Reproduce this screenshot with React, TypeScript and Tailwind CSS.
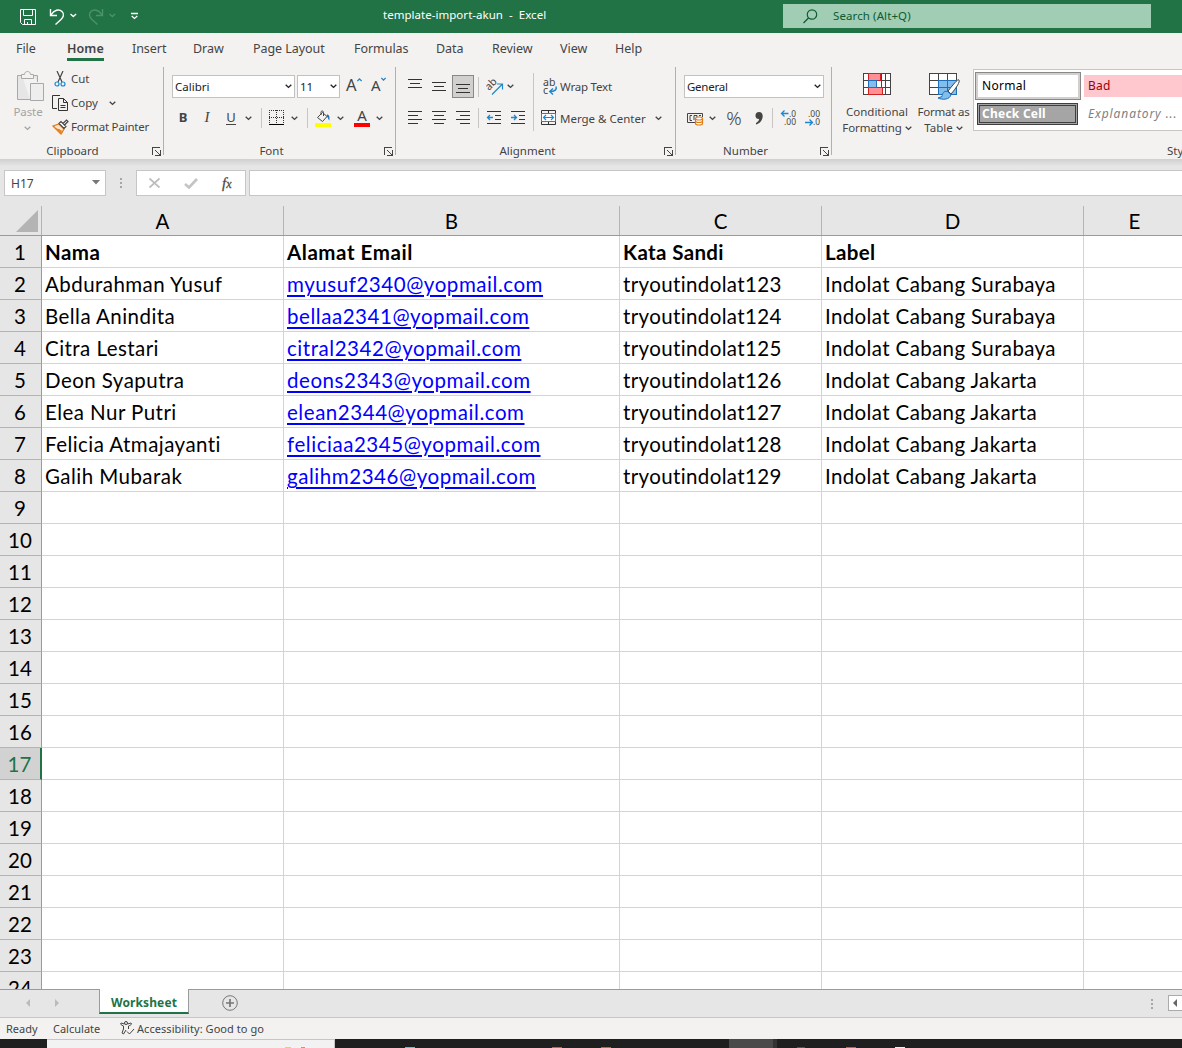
import React from 'react';
import clsx from 'clsx';

const tabs = [
  { name: 'File', width: 'w-[51px]' },
  { name: 'Home', width: 'w-[65px]', active: true },
  { name: 'Insert', width: 'w-[61px]' },
  { name: 'Draw', width: 'w-[60px]' },
  { name: 'Page Layout', width: 'w-[101px]' },
  { name: 'Formulas', width: 'w-[82px]' },
  { name: 'Data', width: 'w-[56px]' },
  { name: 'Review', width: 'w-[68px]' },
  { name: 'View', width: 'w-[55px]' },
  { name: 'Help', width: 'w-[60px]' },
];

const columns = [
  { name: 'A', width: 'w-[242px]', tracking: 'tracking-[.45px]' },
  { name: 'B', width: 'w-[336px]', tracking: 'tracking-[.55px]' },
  { name: 'C', width: 'w-[202px]', tracking: 'tracking-[.37px]' },
  { name: 'D', width: 'w-[262px]', tracking: 'tracking-[.37px]' },
  { name: 'E', width: 'w-[102px]', tracking: 'tracking-[.37px]' },
];

const data = [
  ['Nama', 'Alamat Email', 'Kata Sandi', 'Label'],
  ['Abdurahman Yusuf', 'myusuf2340@yopmail.com', 'tryoutindolat123', 'Indolat Cabang Surabaya'],
  ['Bella Anindita', 'bellaa2341@yopmail.com', 'tryoutindolat124', 'Indolat Cabang Surabaya'],
  ['Citra Lestari', 'citral2342@yopmail.com', 'tryoutindolat125', 'Indolat Cabang Surabaya'],
  ['Deon Syaputra', 'deons2343@yopmail.com', 'tryoutindolat126', 'Indolat Cabang Jakarta'],
  ['Elea Nur Putri', 'elean2344@yopmail.com', 'tryoutindolat127', 'Indolat Cabang Jakarta'],
  ['Felicia Atmajayanti', 'feliciaa2345@yopmail.com', 'tryoutindolat128', 'Indolat Cabang Jakarta'],
  ['Galih Mubarak', 'galihm2346@yopmail.com', 'tryoutindolat129', 'Indolat Cabang Jakarta'],
];

const SELECTED_ROW = 17;

interface ClassProps {
  className?: string;
}

function Chevron({ className = '' }: ClassProps) {
  return (
    <svg width="7" height="5" viewBox="0 0 7 5" fill="none" stroke="currentColor" strokeWidth="1.4" className={clsx('shrink-0', className)}>
      <path d="M.7 .8 3.5 3.4 6.3 .8" />
    </svg>
  );
}

function Launcher() {
  return (
    <svg width="9" height="9" viewBox="0 0 9 9" fill="none" stroke="#444" shapeRendering="crispEdges">
      <path d="M.5 8V.5H8M8.5 3v5.5H3" />
      <path d="m3 3 5 5" shapeRendering="auto" />
    </svg>
  );
}

function Divider({ className = '' }: ClassProps) {
  return <div className={clsx('w-px shrink-0 bg-[#c8c6c4]', className)} />;
}

function Slot({ className = '', children }: ClassProps & { children: React.ReactNode }) {
  return <div className={clsx('flex h-6 shrink-0 items-center justify-center', className)}>{children}</div>;
}

function Group({ label, className = '', labelClass = '', children }: ClassProps & {
  label: string;
  labelClass?: string;
  children: React.ReactNode;
}) {
  return (
    <div className={clsx('flex h-[88px] shrink-0 flex-col justify-between border-r border-[#b1b0af]', className)}>
      <div>{children}</div>
      <div className="-mb-1 flex h-4 items-center">
        <div className={clsx('grow text-center', labelClass)}>{label}</div>
        <div className="w-[11px] shrink-0"><Launcher /></div>
      </div>
    </div>
  );
}

function Lines({ rows }: { rows: number[][] }) {
  return (
    <svg width="16" height="16" viewBox="0 0 16 16" stroke="#333" shapeRendering="crispEdges">
      {rows.map(([y, x1, x2]) => (
        <path key={y} d={`M${x1} ${y + 0.5}H${x2}`} />
      ))}
    </svg>
  );
}

function TitleBar() {
  return (
    <div className="flex h-[33px] items-center bg-[#217346] text-white">
      <svg width="150" height="33" viewBox="0 0 150 33" fill="none" stroke="#fff" className="shrink-0">
        <path d="M20.5 9.5h15v15h-13l-2-2zM23.5 9.5v6h9v-6M24.5 24.5v-5h7v5M27.5 24v-2" />
        <path d="M50.5 9v6.5H57M51 15c3-5 8-6.500 11-3.500s1 6-1 8l-5.500 5" strokeWidth="1.400" />
        <path d="m70.500 14 2.800 2.500 2.800-2.500" strokeWidth="1.400" />
        <g stroke="#4c9169" strokeWidth="1.400">
          <path d="M102.500 9v6.500H96M102 15c-3-5-8-6.500-11-3.500s-1 6 1 8l5.500 5" />
          <path d="m109.500 14 2.800 2.500 2.800-2.500" />
        </g>
        <path d="M131 13.500h7M131.700 16l2.800 2.500 2.800-2.500" strokeWidth="1.300" />
      </svg>
      <div className="w-[633px] shrink-0 pb-[3px] pl-[233px] tracking-[.03px] whitespace-pre">template-import-akun  -  Excel</div>
      <div className="mb-px flex h-6 w-[368px] items-center bg-[#a0cdb4] pl-5 text-[#0e5c2f]">
        <svg width="15" height="15" viewBox="0 0 15 15" fill="none" stroke="currentColor" strokeWidth="1.200">
          <circle cx="9" cy="5.500" r="4.700" />
          <path d="M5.500 9 .5 14" />
        </svg>
        <span className="pl-[15px] tracking-[.1px]">Search (Alt+Q)</span>
      </div>
    </div>
  );
}

function TabStrip() {
  return (
    <div className="flex h-[34px] pl-4 text-[12.500px] tracking-[-.05px]">
      {tabs.map((tab) => (
        <div key={tab.name} className={clsx('shrink-0 pt-1.5 leading-[19px] whitespace-nowrap', tab.width)}>
          <span className={clsx('inline-block', tab.active && 'h-[22px] border-b-3 border-[#217346] tracking-[.1px] font-semibold')}>
            {tab.name}
          </span>
        </div>
      ))}
    </div>
  );
}

function ClipboardGroup() {
  return (
    <Group label="Clipboard" className="w-[164px]" labelClass="pr-[7px]">
      <div className="flex">
        <div className="flex w-[52px] flex-col items-center pt-1 pl-1 text-[#a5a4a3]">
          <svg width="28" height="31" viewBox="0 0 28 31" fill="none" stroke="#a8a8a8" className="ml-[3px]">
            <path d="M14 28.500H1.500v-24H6M17 4.500h4.500V11" fill="#e6e6e6" />
            <path d="M5.500 7.500v-4h3c0-4 6-4 6 0h3v4z" fill="#f3f2f1" />
            <path d="M14.500 12.500h13v17h-13z" fill="#eee" />
          </svg>
          <span className="pt-[2px] leading-4 tracking-[-.1px]">Paste</span>
          <Chevron className="mt-1.5 mr-px" />
        </div>
        <div>
          <div className="flex h-6 items-center">
            <svg width="19" height="16" viewBox="0 0 19 16" fill="none" stroke="#444" strokeWidth="1.200">
              <path d="m5 0 5 11M11 0 6 11" />
              <circle cx="5" cy="13" r="2" stroke="#1e88cf" />
              <circle cx="11" cy="13" r="2" stroke="#1e88cf" />
            </svg>
            Cut
          </div>
          <div className="flex h-6 items-center">
            <svg width="19" height="16" viewBox="0 0 19 16" fill="none" stroke="#333">
              <path d="M5 13.500H.5V.5H8" />
              <path d="M6.500 3.500h5l4 4v8h-9zM11.500 3.500v4h4M8.500 10.500h5M8.500 12.500h5" />
            </svg>
            Copy
            <Chevron className="ml-[11px]" />
          </div>
          <div className="flex h-6 items-center">
            <svg width="19" height="16" viewBox="0 0 19 16" fill="none">
              <path d="m1 7 6-2 5 5-3 5z" fill="#fbe3cb" stroke="#e07a10" strokeWidth="1.300" />
              <path d="M3 9 8.500 10.500l-2 2.500zM6 12l3-1 1 1-1.500 3z" fill="#e98220" />
              <path d="m7 4.500 2-2 5 5-2 2zM11 4.500l3.500-3.500L16 2.500 12.500 6" fill="#fff" stroke="#444" strokeWidth="1.200" />
            </svg>
            <span className="tracking-[-.2px] whitespace-nowrap">Format Painter</span>
          </div>
        </div>
      </div>
    </Group>
  );
}

function FontGroup() {
  return (
    <Group label="Font" className="w-[232px] pl-2" labelClass="pr-[13px]">
      <div className="mt-2 flex h-[23px] items-center">
        <div className="flex h-[23px] w-[123px] items-center justify-between border border-[#c3c2c1] bg-white pr-0.5 pl-[2px] text-[#222]">
          Calibri <Chevron />
        </div>
        <div className="ml-0.5 flex h-[23px] w-[43px] items-center justify-between border border-[#c3c2c1] bg-white pr-0.5 pl-[2px] text-[#222]">
          11 <Chevron />
        </div>
        <div className="-mt-1 flex w-6 items-start pl-1.5 text-[16.500px] leading-[22px]">
          A<svg width="5" height="4" viewBox="0 0 5 4" fill="none" stroke="#1e88cf" strokeWidth="1.300" className="mt-[4px] shrink-0"><path d="m.3 3 2.200-2 2.200 2" /></svg>
        </div>
        <div className="-mt-1 flex w-6 items-start pl-[7px] text-[15px] leading-[24px]">
          A<svg width="5" height="4" viewBox="0 0 5 4" fill="none" stroke="#1e88cf" strokeWidth="1.300" className="mt-[4px] shrink-0"><path d="m.3 1 2.200 2 2.200-2" /></svg>
        </div>
      </div>
      <div className="mt-2 flex items-center text-[13px]">
        <Slot className="w-[22px] pb-px font-bold">B</Slot>
        <Slot className="w-[26px] pb-px font-['Liberation_Serif'] text-[15px] italic">I</Slot>
        <Slot className="w-[22px]"><span className="border-b border-[#444] leading-[13px]">U</span></Slot>
        <Slot className="w-[13px]"><Chevron /></Slot>
        <Divider className="ml-[6px] h-5" />
        <Slot className="ml-[6px] w-[17px]">
          <svg width="15" height="16" viewBox="0 0 15 16" fill="none" stroke="#333" shapeRendering="crispEdges">
            <path d="M0 .5h15M.5 0v14M14.500 0v14M7.500 0v14M0 7.500h15" strokeDasharray="1 1" />
            <path d="M0 14.500h15" stroke="#000" strokeWidth="1" />
          </svg>
        </Slot>
        <Slot className="w-[19px]"><Chevron /></Slot>
        <Divider className="ml-[3px] h-5" />
        <Slot className="ml-1.5 w-[18px]">
          <svg width="16" height="17" viewBox="0 0 16 17" fill="none">
            <path d="M0 13h16v4H0z" fill="#ff0" />
            <path d="m7.500 2.500 4.500 4-4.500 5-5-4zM6 5V2.200C6 .5 8.500.5 8.500 2.500V6" stroke="#444" />
            <path d="M12 4.500c2 0 3 2 2.300 6-1-.5-1-3-2.500-4z" fill="#1f6fb5" />
          </svg>
        </Slot>
        <Slot className="w-4"><Chevron /></Slot>
        <Slot className="ml-1.5 w-4">
          <div className="flex h-[18px] w-4 flex-col items-center justify-between">
            <span className="text-[15px] leading-[13px]">A</span>
            <div className="h-1 w-4 bg-[#f00]" />
          </div>
        </Slot>
        <Slot className="w-[18px]"><Chevron /></Slot>
      </div>
    </Group>
  );
}

function AlignmentGroup() {
  return (
    <Group label="Alignment" className="w-[280px]" labelClass="pr-[5px]">
      <div className="flex pl-[7px]">
        <div>
          <div className="mt-2 flex h-[23px] items-center">
            <Slot className="w-6"><Lines rows={[[0, 1, 15], [4, 3, 13], [8, 1, 15]]} /></Slot>
            <Slot className="w-6"><Lines rows={[[3, 1, 15], [7, 3, 13], [11, 1, 15]]} /></Slot>
            <div className="ml-px flex h-[23px] w-[22px] items-end justify-center border border-[#8a8886] bg-[#d2d0ce] pb-px">
              <Lines rows={[[4, 1, 15], [8, 3, 13], [12, 1, 15]]} />
            </div>
            <Divider className="ml-1 h-5" />
            <Slot className="ml-1.5 w-[19px]">
              <svg width="18" height="18" viewBox="0 0 18 18" fill="none">
                <text x="0" y="10" fontSize="10.500" fill="#444" transform="rotate(-45 5 8)">ab</text>
                <path d="M6 16.500 16 6.500M11 6h5.500v5.500" stroke="#1e88cf" strokeWidth="1.200" />
              </svg>
            </Slot>
            <Slot className="w-3"><Chevron /></Slot>
          </div>
          <div className="mt-2 flex h-6 items-center">
            <Slot className="w-6"><Lines rows={[[1, 1, 15], [5, 1, 11], [9, 1, 15], [13, 1, 11]]} /></Slot>
            <Slot className="w-6"><Lines rows={[[1, 1, 15], [5, 3, 13], [9, 1, 15], [13, 3, 13]]} /></Slot>
            <Slot className="w-6"><Lines rows={[[1, 1, 15], [5, 5, 15], [9, 1, 15], [13, 5, 15]]} /></Slot>
            <Divider className="ml-[3px] h-5" />
            <Slot className="ml-[3px] w-6">
              <svg width="16" height="16" viewBox="0 0 16 16" fill="none" stroke="#333">
                <path d="M1 1.500h14M9 5.500h6M9 9.500h6M1 13.500h14" />
                <path d="M7 7.500H1.500M4 5 1.500 7.500 4 10" stroke="#1e88cf" strokeWidth="1.300" />
              </svg>
            </Slot>
            <Slot className="w-6">
              <svg width="16" height="16" viewBox="0 0 16 16" fill="none" stroke="#333">
                <path d="M1 1.500h14M9 5.500h6M9 9.500h6M1 13.500h14" />
                <path d="M1 7.500h5.500M4 5l2.500 2.500L4 10" stroke="#1e88cf" strokeWidth="1.300" />
              </svg>
            </Slot>
          </div>
        </div>
        <Divider className="mt-1.5 ml-[3px] h-[58px]" />
        <div className="pl-[7px]">
          <div className="mt-2 flex h-[23px] items-center">
            <svg width="19" height="20" viewBox="0 0 19 20" fill="none">
              <text x="2" y="9" fontSize="10.500" fill="#444">ab</text>
              <text x="2" y="17" fontSize="10.500" fill="#444">c</text>
              <path d="M15 9.500c1 3-1 5-6 5M12 11.500l-3.200 3 3.200 3" stroke="#1e88cf" strokeWidth="1.500" />
            </svg>
            <span className="tracking-[-.2px] whitespace-nowrap">Wrap Text</span>
          </div>
          <div className="mt-2 flex h-6 items-center">
            <svg width="19" height="16" viewBox="0 0 19 16" fill="none" stroke="#333">
              <path d="M.5 .5h14v14H.5zM7.500 .5v14" />
              <path d="M.5 3.500h14v8H.5z" fill="#fff" stroke="#1e88cf" />
              <path d="M2.500 7.500h10M5 5 2.500 7.500 5 10M10 5l2.500 2.500L10 10" stroke="#1e88cf" strokeWidth="1.200" />
            </svg>
            <span className="w-[86px] pt-px whitespace-nowrap">Merge &amp; Center</span>
            <Chevron className="ml-[9px]" />
          </div>
        </div>
      </div>
    </Group>
  );
}

function NumberGroup() {
  return (
    <Group label="Number" className="w-[156px] pl-2" labelClass="pr-[13px]">
      <div className="mt-2 flex h-[23px] w-[140px] items-center justify-between border border-[#c3c2c1] bg-white pr-0.5 pl-[2px] tracking-[-.25px] text-[#222]">
        General <Chevron />
      </div>
      <div className="mt-2 flex items-center">
        <Slot className="w-[22px]">
          <svg width="17" height="15" viewBox="0 0 17 15" fill="none">
            <path d="M8 11.500H.5v-9h15V6" stroke="#444" />
            <path d="M5 4.500H3v5h2M7 9V4.500h3V6M12 4.500h2" stroke="#444" />
            <path d="M8.500 7.500v5c0 2 7 2 7 0v-5" fill="#fff" stroke="#e07a10" strokeWidth="1.200" />
            <ellipse cx="12" cy="7.500" rx="3.500" ry="1.500" fill="#fff" stroke="#e07a10" strokeWidth="1.200" />
            <path d="M8.500 10c0 2 7 2 7 0" stroke="#e07a10" strokeWidth="1.200" />
          </svg>
        </Slot>
        <Slot className="w-[13px]"><Chevron /></Slot>
        <Slot className="w-[30px]">
          <span className="text-[19px] font-light">%</span>
        </Slot>
        <Slot className="w-[19px]">
          <svg width="8" height="13" viewBox="0 0 8 13" fill="#444">
            <circle cx="4" cy="3.500" r="3.500" />
            <path d="M7.500 3.500C8 8 5 11.500 1 12.500V11c2-1 3.500-3 3-5z" />
          </svg>
        </Slot>
        <Divider className="ml-1 h-5" />
        <Slot className="ml-1 w-6">
          <svg width="18" height="20" viewBox="0 0 18 20" fill="none">
            <path d="M8.500 5.500H1.500M4.500 2.500l-3 3 3 3" stroke="#1e88cf" strokeWidth="1.300" />
            <text x="9" y="9" fontSize="9.500" fill="#444" textLength="7" lengthAdjust="spacingAndGlyphs">.0</text>
            <text x="4" y="17" fontSize="9.500" fill="#444" textLength="12" lengthAdjust="spacingAndGlyphs">.00</text>
          </svg>
        </Slot>
        <Slot className="w-6">
          <svg width="18" height="20" viewBox="0 0 18 20" fill="none">
            <path d="M1 14.500h7.500M5.500 11.500l3 3-3 3" stroke="#1e88cf" strokeWidth="1.300" />
            <text x="4" y="9" fontSize="9.500" fill="#444" textLength="12" lengthAdjust="spacingAndGlyphs">.00</text>
            <text x="9" y="17" fontSize="9.500" fill="#444" textLength="7" lengthAdjust="spacingAndGlyphs">.0</text>
          </svg>
        </Slot>
      </div>
    </Group>
  );
}

function StylesGroup() {
  return (
    <div className="flex h-[92px] w-[350px] shrink-0 flex-col justify-between">
      <div className="flex h-[66px]">
        <div className="flex w-[90px] shrink-0 flex-col items-center pt-[5px] leading-4 whitespace-nowrap">
          <svg width="28" height="24" viewBox="0 0 28 24" fill="#fff" stroke="#444" shapeRendering="crispEdges" className="mb-[8px] shrink-0">
            <path d="M.5 1.500h27v21H.5zM.5 8.500h27M.5 15.500h27M5.500 1.500v21M18.500 1.500v21M22.500 1.500v21" />
            <path d="M5.500 1.500h12v7h-12zM5.500 15.500h14v7h-14z" fill="#ff8f94" stroke="#d02020" />
            <path d="M5.500 8.500h8v7h-8z" fill="#83bdec" stroke="#1e6fb8" />
          </svg>
          <span>Conditional</span>
          <span className="flex items-center gap-[3px] tracking-[-.1px]">Formatting <Chevron /></span>
        </div>
        <div className="flex w-[43px] shrink-0 flex-col items-center pt-[5px] leading-4 whitespace-nowrap">
          <svg width="31" height="28" viewBox="0 0 31 28" fill="none" className="mb-[4px] ml-px shrink-0">
            <path d="M.5 1.500h28v21H.5z" fill="#fff" />
            <path d="M10 8h18v14H10z" fill="#83bdec" />
            <path d="M.5 1.500h27v21H.5zM.5 8.500h27M.5 15.500h27M9.500 1.500v21M18.500 1.500v21" stroke="#444" shapeRendering="crispEdges" />
            <path d="M9.500 8.500h18v14h-18zM9.500 15.500h18M18.500 8.500v14" stroke="#1e6fb8" shapeRendering="crispEdges" />
            <path d="M30 8c-1-1-3 1-11 11l3 3c6-7 9-12 8-14z" fill="#fff" stroke="#444" />
            <path d="M18.500 19.500c-4-1-5 2-5.500 5l-4 1.500c4 2 12 2 13-3.500z" fill="#83bdec" stroke="#1e6fb8" />
          </svg>
          <span className="tracking-[-.2px]">Format as</span>
          <span className="flex items-center gap-[3px]">Table <Chevron /></span>
        </div>
        <div className="mt-0.5 ml-2 grid h-[62px] w-[230px] shrink-0 grid-cols-[106px_120px] content-start gap-x-[2px] border border-[#c8c6c4] bg-white pt-0.5 pl-px text-[12px]">
          <div className="flex h-7 items-center border border-[#8a8886] bg-white pl-1.5 tracking-[.3px] text-black ring-2 ring-[#d2d0ce] ring-inset">Normal</div>
          <div className="mt-[3px] ml-px flex h-[22px] items-center bg-[#ffc7ce] pl-1 tracking-[.2px] text-[#9c0006]">Bad</div>
          <div className="mt-[3px] ml-[2px] flex h-[22px] w-[101px] items-center border-3 border-double border-[#3f3f3f] bg-[#a5a5a5] pl-[2px] tracking-[.25px] font-bold text-white">Check Cell</div>
          <div className="mt-[3px] flex h-[22px] items-center pl-[5px] tracking-[.9px] whitespace-nowrap text-[#7f7f7f] italic">Explanatory ...</div>
        </div>
      </div>
      <div className="flex h-4 items-center pl-[335px]">Styles</div>
    </div>
  );
}

function FormulaBar() {
  return (
    <div className="flex h-[47px] bg-gradient-to-b from-[#cfcfcf] via-[#e6e6e6] via-15% to-[#e6e6e6] pt-[11px] pl-1">
      <div className="flex h-[26px] w-[102px] items-center justify-between border border-[#c6c6c6] bg-white pr-[5px] pl-1.5 text-[12px]">
        <span className="pt-px">H17</span>
        <svg width="8" height="5" viewBox="0 0 8 5" fill="#777" className="mb-[2px]"><path d="M0 0h8L4 4.500z" /></svg>
      </div>
      <div className="flex h-[26px] w-[30px] flex-col items-center justify-center gap-[2px]">
        <i className="size-[2px] bg-[#a6a6a6]" />
        <i className="size-[2px] bg-[#a6a6a6]" />
        <i className="size-[2px] bg-[#a6a6a6]" />
      </div>
      <div className="flex h-[26px] w-[110px] items-center border border-[#c6c6c6] bg-white pl-[12px]">
        <svg width="11" height="10" viewBox="0 0 11 10" stroke="#bcbcbc" strokeWidth="1.800"><path d="m.5 .5 10 9M10.500 .5l-10 9" /></svg>
        <svg width="14" height="11" viewBox="0 0 14 11" fill="none" stroke="#c4c4c4" strokeWidth="2.600" className="ml-6"><path d="m1 6 4 3.500L13 1" /></svg>
        <span className="ml-6 font-['Liberation_Serif'] text-[15px] leading-4 italic [-webkit-text-stroke:.3px_#555]">f<span className="text-[12px]">x</span></span>
      </div>
      <div className="ml-[3px] h-[26px] grow border border-r-0 border-[#c6c6c6] bg-white" />
    </div>
  );
}

function Sheet() {
  return (
    <div className="h-[783px] overflow-hidden bg-white font-['Lato'] text-[20.500px] text-black [font-variant-ligatures:none]">
      <div className="flex h-[30px] w-[1186px] border-b border-[#9b9b9b] bg-[#e6e6e6]">
        <div className="flex w-[42px] shrink-0 items-end justify-end border-r border-[#b4b4b4] pr-[3px] pb-[3px]">
          <svg width="22" height="22" viewBox="0 0 22 22" fill="#b4b4b4"><path d="M22 0v22H0z" /></svg>
        </div>
        {columns.map((col) => (
          <div key={col.name} className={clsx('shrink-0 border-r border-[#b4b4b4] text-center leading-[31px]', col.width)}>
            {col.name}
          </div>
        ))}
      </div>
      {[...Array(24)].map((_, i) => (
        <div key={i} className="flex h-8 w-[1186px]">
          <div
            className={clsx(
              'w-[42px] shrink-0 border-b border-[#b4b4b4] pr-px text-center leading-[32px]',
              i + 1 === SELECTED_ROW
                ? 'border-r-2 border-r-[#217346] bg-[#d2d2d2] text-[#217346]'
                : 'border-r border-r-[#9b9b9b] bg-[#e6e6e6]'
            )}
          >
            {i + 1}
          </div>
          {columns.map((col, c) => (
            <div
              key={col.name}
              className={clsx(
                'shrink-0 border-r border-b border-[#d4d4d4] pl-[3px] leading-[32px] whitespace-nowrap',
                col.width,
                col.tracking,
                i === 0 && 'font-bold',
                c === 1 && i > 0 && 'text-[#0000ff] underline decoration-2 underline-offset-[3px]'
              )}
            >
              {data[i]?.[c]}
            </div>
          ))}
        </div>
      ))}
    </div>
  );
}

function SheetTabs() {
  return (
    <div className="flex h-[29px] border-t border-b border-t-[#9b9b9b] border-b-[#c6c6c6] bg-[#e6e6e6]">
      <div className="flex w-[99px] items-center gap-[25px] pb-px pl-[26px]">
        <svg width="4" height="8" viewBox="0 0 4 8" fill="#bbb"><path d="M4 0v8L0 4z" /></svg>
        <svg width="4" height="8" viewBox="0 0 4 8" fill="#bbb"><path d="M0 0v8l4-4z" /></svg>
      </div>
      <div className="-mt-px flex h-[25px] w-[90px] items-center justify-center border-x border-b-2 border-x-[#9b9b9b] border-b-[#217346] bg-white pt-[5px] text-[12px] tracking-[.1px] font-bold text-[#217346]">
        Worksheet
      </div>
      <svg width="16" height="16" viewBox="0 0 16 16" fill="none" stroke="#777" className="mt-[5px] ml-[33px]">
        <circle cx="8" cy="8" r="7.300" />
        <path d="M8 4v8M4 8h8" strokeWidth="1.700" />
      </svg>
      <div className="ml-auto flex w-[30px] flex-col items-start justify-center gap-[2px] pl-[13px]">
        <i className="size-[2px] bg-[#a6a6a6]" />
        <i className="size-[2px] bg-[#a6a6a6]" />
        <i className="size-[2px] bg-[#a6a6a6]" />
      </div>
      <div className="mt-[5px] flex h-4 w-[14px] items-center border border-r-0 border-[#ababab] bg-white pl-1">
        <svg width="4" height="8" viewBox="0 0 4 8" fill="#666"><path d="M4 0v8L0 4z" /></svg>
      </div>
    </div>
  );
}

function StatusBar() {
  return (
    <div className="flex h-[21px] items-center bg-[#f3f2f1] pt-px pl-1.5 text-[11px] whitespace-nowrap">
      <span className="w-[47px]">Ready</span>
      <span className="w-[67px]">Calculate</span>
      <svg width="15" height="14" viewBox="0 0 15 14" fill="none" stroke="#444" className="mr-[2px] mb-[2px]">
        <circle cx="6" cy="2" r="1.500" />
        <path d="M4.500 3 1 2C0 3 1 4 3.500 5v3L2 12l1.500 1L6 9M7.500 3 11 2c1.500 1 0 2-2.500 3v3M7 10.500l2.500 2.500L14 8" />
      </svg>
      <span className="tracking-[.05px]">Accessibility: Good to go</span>
    </div>
  );
}

function Taskbar() {
  return (
    <div className="flex h-[9px] bg-[#1f1f1f]">
      <div className="w-[47px]" />
      <div className="flex w-[288px] items-end gap-2.5 border-t border-r border-[#c6c6c6] bg-[#f2f2f2] pl-[238px]">
        <i className="h-px w-1.5 bg-[#e8d44d]" />
        <i className="h-px w-1 bg-[#e08a6a]" />
      </div>
      <div className="flex w-[394px] items-end">
        <i className="ml-[70px] h-px w-2.5 bg-[#58c4dc]" />
        <i className="ml-[137px] h-px w-2.5 bg-[#d8574a]" />
        <i className="ml-[39px] h-px w-2.5 bg-[#d8574a]" />
      </div>
      <div className="w-12 border-r-4 border-[#333] bg-[#4a4a4a]" />
      <div className="flex items-end">
        <i className="ml-5 h-px w-2 bg-[#555]" />
        <i className="ml-[41px] h-px w-2.5 bg-[#d8574a]" />
        <i className="ml-[39px] h-px w-2.5 bg-[#eee]" />
      </div>
    </div>
  );
}

export default function App() {
  return (
    <div className="h-[1048px] w-[1182px] overflow-hidden bg-[#f3f2f1] font-['Noto_Sans','Open_Sans',sans-serif] text-[11.500px] text-[#444]">
      <TitleBar />
      <TabStrip />
      <div className="flex h-[92px]">
        <ClipboardGroup />
        <FontGroup />
        <AlignmentGroup />
        <NumberGroup />
        <StylesGroup />
      </div>
      <FormulaBar />
      <Sheet />
      <SheetTabs />
      <StatusBar />
      <Taskbar />
    </div>
  );
}
